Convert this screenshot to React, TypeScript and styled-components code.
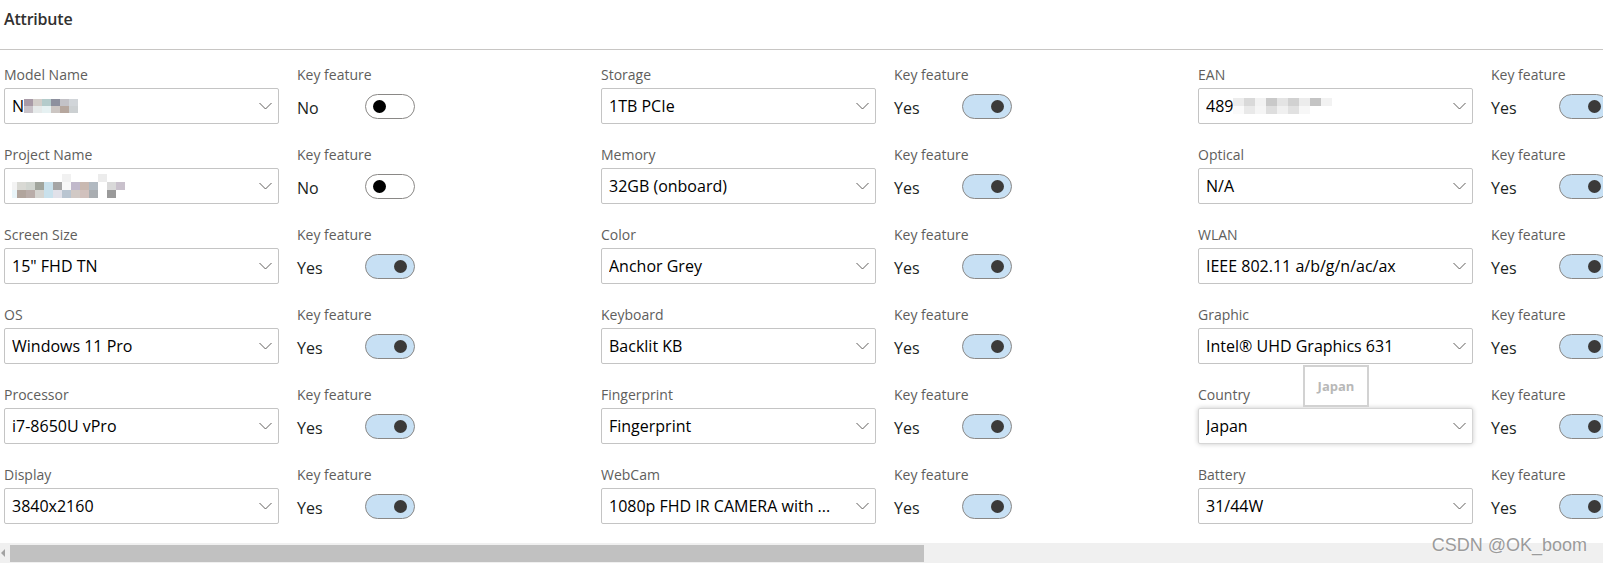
import React from "react";
import styled, { createGlobalStyle } from "styled-components";

const Global = createGlobalStyle`
  html, body { margin: 0; padding: 0; background: #fff; }
  body { font-family: "Segoe UI", "Open Sans", "Noto Sans", sans-serif; overflow: hidden; }
  * { box-sizing: border-box; }
`;

const Page = styled.div`
  position: relative;
  width: 1603px;
  height: 563px;
  display: flex;
  flex-direction: column;
  overflow: hidden;
`;

const Header = styled.div`
  height: 50px;
  flex: none;
  padding: 8px 4px 0;
  border-bottom: 1px solid #c8c6c4;
`;

const Title = styled.h2`
  margin: 0;
  font-size: 16px;
  line-height: 22px;
  font-weight: 600;
  color: #323130;
  letter-spacing: -0.2px;
`;

const Content = styled.div`
  flex: 1;
  overflow: hidden;
  padding: 15px 0 0 4px;
`;

const Grid = styled.div`
  display: grid;
  grid-auto-flow: column;
  grid-template-rows: repeat(6, auto);
  grid-template-columns: repeat(3, 597px);
  row-gap: 21px;
  width: max-content;
`;

const Cell = styled.div`
  display: flex;
  align-items: flex-start;
`;

const Field = styled.div`
  position: relative;
  width: 275px;
  display: flex;
  flex-direction: column;
  gap: 3px;
`;

const Label = styled.div`
  font-size: 14px;
  line-height: 20px;
  color: #605e5c;
  white-space: nowrap;
`;

const Select = styled.div<{ $raised?: boolean }>`
  height: 36px;
  display: flex;
  align-items: center;
  padding: 0 6px 0 7px;
  border: 1px solid ${(p) => (p.$raised ? "#d6d6d6" : "#c4c4c4")};
  border-radius: 2px;
  background: #fff;
  box-shadow: ${(p) => (p.$raised ? "0 0 5px rgba(0,0,0,0.22)" : "none")};
`;

const Value = styled.span`
  flex: 1;
  min-width: 0;
  display: flex;
  align-items: center;
  font-size: 16px;
  line-height: 22px;
  color: #000;
  white-space: nowrap;
  overflow: hidden;
`;

const Chevron = styled.svg`
  flex: none;
  width: 13px;
  height: 8px;
  margin-left: 6px;
`;

const KeyFeature = styled.div`
  margin-left: 18px;
  display: flex;
  flex-direction: column;
  gap: 3px;
`;

const KeyRow = styled.div`
  height: 36px;
  display: flex;
  align-items: center;
`;

const KeyText = styled.span`
  width: 68px;
  font-size: 16px;
  line-height: 22px;
  color: #201f1e;
  padding-top: 3px;
`;

const Toggle = styled.div<{ $on: boolean }>`
  flex: none;
  width: 50px;
  height: 25px;
  border-radius: 13px;
  border: 1px solid #8a8886;
  background: ${(p) => (p.$on ? "#c7e0f4" : "#fff")};
  display: flex;
  align-items: center;
  justify-content: ${(p) => (p.$on ? "flex-end" : "flex-start")};
  padding: 0 7px;
`;

const Knob = styled.span<{ $on: boolean }>`
  width: 13px;
  height: 13px;
  border-radius: 50%;
  background: ${(p) => (p.$on ? "#3b3a39" : "#000")};
`;

const Tooltip = styled.div`
  position: absolute;
  left: 105px;
  top: -20px;
  width: 66px;
  height: 42px;
  border: 2px solid #d2d2d2;
  background: #fff;
  padding-top: 9px;
  text-align: center;
  font-size: 13px;
  line-height: 20px;
  font-weight: 700;
  color: #b8b8b8;
  z-index: 2;
`;

const Mosaic = styled.span<{ $cols: number; $w: number; $h: number; $shift?: number }>`
  display: inline-grid;
  grid-template-columns: repeat(${(p) => p.$cols}, ${(p) => p.$w}px);
  grid-auto-rows: ${(p) => p.$h}px;
  margin-left: ${(p) => p.$shift ?? 0}px;
`;

const Tile = styled.span<{ $c: string }>`
  background: ${(p) => p.$c};
`;

const ScrollBar = styled.div`
  flex: none;
  height: 20px;
  background: #f0f0f0;
  display: flex;
  align-items: center;
  padding-left: 1px;
`;

const Arrow = styled.span`
  width: 0;
  height: 0;
  border-top: 4px solid transparent;
  border-bottom: 4px solid transparent;
  border-right: 4px solid #a3a3a3;
  margin-right: 5px;
`;

const Thumb = styled.div`
  width: 914px;
  height: 17px;
  background: #c1c1c1;
`;

const Watermark = styled.div`
  position: absolute;
  right: 16px;
  bottom: 8px;
  font-family: "Liberation Sans", Arial, sans-serif;
  font-size: 18px;
  line-height: 20px;
  color: #9b9b9b;
  text-shadow: 0 0 2px #fff;
  white-space: nowrap;
`;

type Blur = { cols: number; w: number; h: number; colors: string[]; shift?: number };

const blurModel: Blur = {
  cols: 6,
  w: 9,
  h: 7,
  colors: [
    "#a89aa6", "#d2cdc9", "#b4cbcb", "#8d909e", "#c3c2c7", "#d1d5d9",
    "#c8c2c8", "#e6eaea", "#e6f1f2", "#ccc6c3", "#b6a79e", "#ccd0d2",
  ],
};

const blurProject: Blur = {
  cols: 13,
  w: 9,
  h: 8,
  shift: -4,
  colors: [
    "#fff", "#fff", "#fff", "#fff", "#fff", "#fff", "#f1f1f1", "#fff", "#fff", "#fff", "#ececec", "#fff", "#fff",
    "#f3f3f3", "#d9d9d4", "#d1d5d0", "#a1a59d", "#c9e1ec", "#a5a5a5", "#f8f8f8", "#c1b9cb", "#c9b9b1", "#b1b9c1", "#fff", "#d9d9d9", "#c9c1cc",
    "#e9f4f8", "#b1a59d", "#b9ada9", "#d5d5d1", "#c9e1ec", "#e1e1e9", "#b9c5d1", "#d1c9c5", "#d1c1bd", "#a9adb1", "#fff", "#9a9a9a", "#fff",
  ],
};

const blurEan: Blur = {
  cols: 9,
  w: 11,
  h: 8,
  colors: [
    "#ececec", "#d9d9d9", "#f2f2f2", "#c9c9c9", "#e4e4e4", "#d1d1d1", "#ececec", "#c4c4c4", "#f2f2f2",
    "#fafafa", "#e9e9e9", "#f5f5f5", "#dedede", "#f0f0f0", "#e1e1e1", "#f7f7f7", "#fff", "#fff",
  ],
};

type Item = {
  label: string;
  value: string;
  on: boolean;
  blur?: Blur;
  raised?: boolean;
  tip?: string;
};

const items: Item[] = [
  { label: "Model Name", value: "N", on: false, blur: blurModel },
  { label: "Project Name", value: "", on: false, blur: blurProject },
  { label: "Screen Size", value: '15" FHD TN', on: true },
  { label: "OS", value: "Windows 11 Pro", on: true },
  { label: "Processor", value: "i7-8650U vPro", on: true },
  { label: "Display", value: "3840x2160", on: true },
  { label: "Storage", value: "1TB PCIe", on: true },
  { label: "Memory", value: "32GB (onboard)", on: true },
  { label: "Color", value: "Anchor Grey", on: true },
  { label: "Keyboard", value: "Backlit KB", on: true },
  { label: "Fingerprint", value: "Fingerprint", on: true },
  { label: "WebCam", value: "1080p FHD IR CAMERA with ...", on: true },
  { label: "EAN", value: "489", on: true, blur: blurEan },
  { label: "Optical", value: "N/A", on: true },
  { label: "WLAN", value: "IEEE 802.11 a/b/g/n/ac/ax", on: true },
  { label: "Graphic", value: "Intel® UHD Graphics 631", on: true },
  { label: "Country", value: "Japan", on: true, raised: true, tip: "Japan" },
  { label: "Battery", value: "31/44W", on: true },
];

const ChevronIcon = () => (
  <Chevron viewBox="0 0 13 8">
    <polyline points="0.5,1 6.5,7 12.5,1" fill="none" stroke="#605e5c" strokeWidth="1" />
  </Chevron>
);

const BlurBlock = ({ b }: { b: Blur }) => (
  <Mosaic $cols={b.cols} $w={b.w} $h={b.h} $shift={b.shift}>
    {b.colors.map((c, i) => (
      <Tile key={i} $c={c} />
    ))}
  </Mosaic>
);

export default function App() {
  return (
    <>
      <Global />
      <Page>
        <Header>
          <Title>Attribute</Title>
        </Header>
        <Content>
          <Grid>
            {items.map((it) => (
              <Cell key={it.label}>
                <Field>
                  <Label>{it.label}</Label>
                  <Select $raised={it.raised}>
                    <Value>
                      {it.value}
                      {it.blur && <BlurBlock b={it.blur} />}
                    </Value>
                    <ChevronIcon />
                  </Select>
                  {it.tip && <Tooltip>{it.tip}</Tooltip>}
                </Field>
                <KeyFeature>
                  <Label>Key feature</Label>
                  <KeyRow>
                    <KeyText>{it.on ? "Yes" : "No"}</KeyText>
                    <Toggle $on={it.on}>
                      <Knob $on={it.on} />
                    </Toggle>
                  </KeyRow>
                </KeyFeature>
              </Cell>
            ))}
          </Grid>
        </Content>
        <ScrollBar>
          <Arrow />
          <Thumb />
        </ScrollBar>
        <Watermark>CSDN @OK_boom</Watermark>
      </Page>
    </>
  );
}
